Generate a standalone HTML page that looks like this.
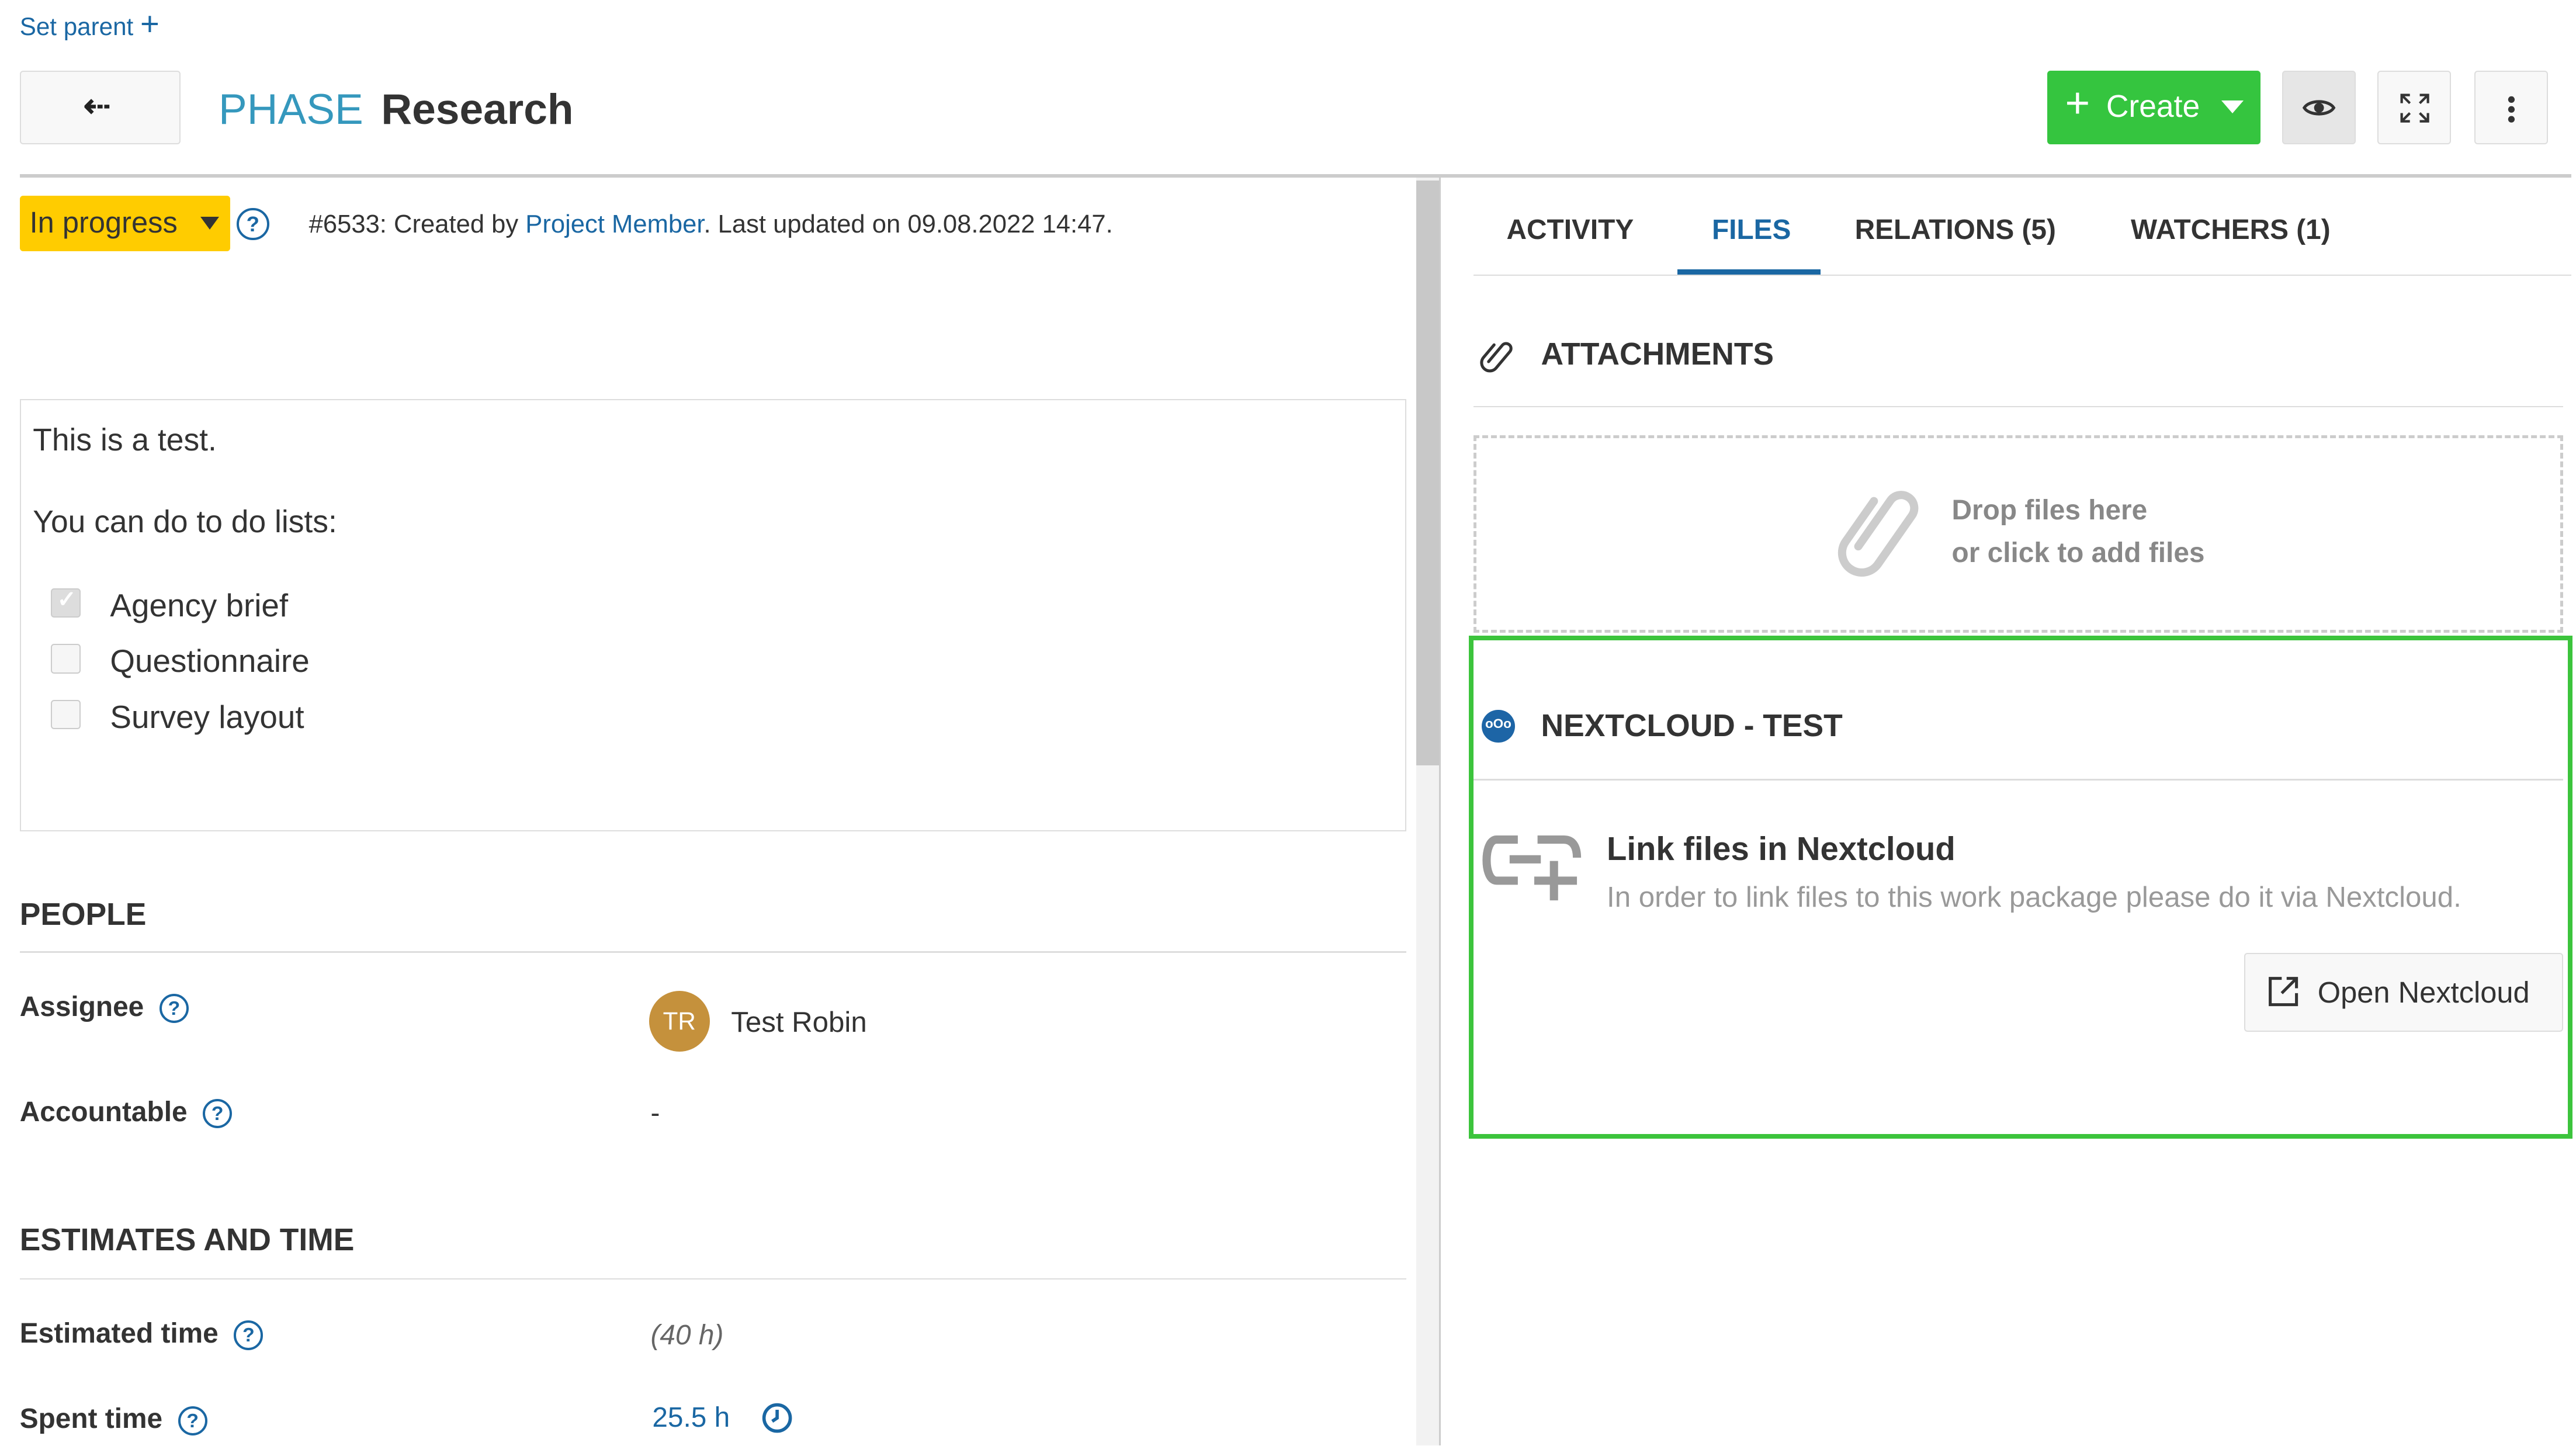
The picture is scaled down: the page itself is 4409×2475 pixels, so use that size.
<!DOCTYPE html>
<html><head><meta charset="utf-8"><style>
html,body{margin:0;padding:0;background:#fff;overflow:hidden}
body{width:4409px;height:2475px}
#r{zoom:2.8119;width:1568px;height:880px;position:relative;font-family:"Liberation Sans",sans-serif;color:#333}
.a{position:absolute;white-space:nowrap}
.btn{position:absolute;background:#f8f8f8;border:1px solid #ddd;border-radius:2px;box-sizing:border-box}
.h{font-size:19px;font-weight:bold;color:#333}
.lbl{font-size:17px;font-weight:bold;color:#333}
.q{display:inline-block;width:15px;height:15px;border:1.6px solid #1a67a3;border-radius:50%;color:#1a67a3;font-size:12px;font-weight:bold;text-align:center;line-height:15px;vertical-align:middle}
.cb{position:absolute;left:31px;width:18px;height:18px;border:1px solid #ccc;border-radius:2px;background:#f6f6f6;box-sizing:border-box}
.tab{position:absolute;top:130px;font-size:17px;color:#333;font-weight:bold}
</style></head><body><div id="r">
<div class="a" style="left:12px;top:8px;font-size:15px;color:#1a67a3">Set parent <span style="font-size:20px;line-height:10px">+</span></div>
<div class="btn" style="left:12px;top:43px;width:98px;height:45px"><div class="a" style="left:38px;top:9px;font-size:20px;color:#222;font-weight:bold">&#8672;</div></div>
<div class="a" style="left:133px;top:52px;font-size:26px;color:#3598bd">PHASE</div>
<div class="a" style="left:232px;top:52px;font-size:26px;color:#333;font-weight:bold">Research</div>
<div class="a" style="left:1246px;top:43px;width:130px;height:45px;background:#35c53f;border-radius:2px;color:#fff;font-size:19px"><span class="a" style="left:11px;top:6px;font-size:26px;line-height:28px">+</span><span class="a" style="left:36px;top:11px">Create</span><span class="a" style="left:106px;top:18px;border-left:7px solid transparent;border-right:7px solid transparent;border-top:8px solid #fff"></span></div>
<div class="btn" style="left:1389px;top:43px;width:45px;height:45px;background:#e6e6e6"><svg class="a" style="left:12px;top:14px" width="20" height="16" viewBox="0 0 20 16"><path d="M1 8C4 3 16 3 19 8C16 13 4 13 1 8Z" fill="none" stroke="#333" stroke-width="1.8"/><circle cx="10" cy="8" r="3" fill="#333"/></svg></div>
<div class="btn" style="left:1447px;top:43px;width:45px;height:45px"><svg class="a" style="left:12px;top:12px" width="20" height="20" viewBox="0 0 20 20" fill="none" stroke="#333" stroke-width="1.5"><path d="M2 7V2H7M2 2L7 7M13 2H18V7M18 2L13 7M2 13V18H7M2 18L7 13M18 13V18H13M18 18L13 13"/></svg></div>
<div class="btn" style="left:1506px;top:43px;width:45px;height:45px"><svg class="a" style="left:19px;top:14px" width="6" height="18"><circle cx="3" cy="3" r="2" fill="#333"/><circle cx="3" cy="9" r="2" fill="#333"/><circle cx="3" cy="15" r="2" fill="#333"/></svg></div>
<div class="a" style="left:12px;top:106px;width:1553px;height:2px;background:#ccc"></div>
<div class="a" style="left:862px;top:108px;width:14px;height:772px;background:#f2f2f2"></div>
<div class="a" style="left:862px;top:110px;width:14px;height:356px;background:#c8c8c8"></div>
<div class="a" style="left:876px;top:108px;width:1px;height:772px;background:#ccc"></div>
<div class="a" style="left:12px;top:119px;width:128px;height:34px;background:#ffcc00;border-radius:2px"><span class="a" style="left:6px;top:6px;font-size:18px;color:#333">In progress</span><span class="a" style="left:110px;top:13px;border-left:6px solid transparent;border-right:6px solid transparent;border-top:8px solid #333"></span></div>
<div class="a" style="left:144px;top:126px"><span class="q" style="width:17px;height:17px;line-height:17px;font-size:13px">?</span></div>
<div class="a" style="left:188px;top:128px;font-size:15.5px">#6533: Created by <span style="color:#1a67a3">Project Member</span>. Last updated on 09.08.2022 14:47.</div>
<div class="a" style="left:12px;top:243px;width:844px;height:263px;border:1px solid #ddd;box-sizing:border-box"></div>
<div class="a" style="left:20px;top:257px;font-size:19px">This is a test.</div>
<div class="a" style="left:20px;top:307px;font-size:19px">You can do to do lists:</div>
<div class="cb" style="top:358px;background:#ddd;border-color:#ccc"><span class="a" style="left:3px;top:-2px;color:#fff;font-size:14px;font-weight:bold">&#10003;</span></div>
<div class="a" style="left:67px;top:357px;font-size:19.5px">Agency brief</div>
<div class="cb" style="top:392px"></div>
<div class="a" style="left:67px;top:391px;font-size:19.5px">Questionnaire</div>
<div class="cb" style="top:426px"></div>
<div class="a" style="left:67px;top:425px;font-size:19.5px">Survey layout</div>
<div class="a h" style="left:12px;top:546px">PEOPLE</div>
<div class="a" style="left:12px;top:579px;width:844px;height:1px;background:#ddd"></div>
<div class="a lbl" style="left:12px;top:603px">Assignee &nbsp;<span class="q">?</span></div>
<div class="a" style="left:395px;top:603px;width:37px;height:37px;border-radius:50%;background:#c5913c;color:#fff;font-size:15px;text-align:center;line-height:37px">TR</div>
<div class="a" style="left:445px;top:612px;font-size:17.5px">Test Robin</div>
<div class="a lbl" style="left:12px;top:667px">Accountable &nbsp;<span class="q">?</span></div>
<div class="a" style="left:396px;top:668px;font-size:17px">-</div>
<div class="a h" style="left:12px;top:744px">ESTIMATES AND TIME</div>
<div class="a" style="left:12px;top:778px;width:844px;height:1px;background:#ddd"></div>
<div class="a lbl" style="left:12px;top:802px">Estimated time &nbsp;<span class="q">?</span></div>
<div class="a" style="left:396px;top:803px;font-size:17px;font-style:italic;color:#666">(40 h)</div>
<div class="a lbl" style="left:12px;top:854px">Spent time &nbsp;<span class="q">?</span></div>
<div class="a" style="left:397px;top:853px;font-size:17px;color:#1a67a3">25.5 h</div>
<svg class="a" style="left:463px;top:853px" width="20" height="20" viewBox="0 0 20 20" fill="none" stroke="#1a67a3" stroke-width="2"><circle cx="10" cy="10" r="8"/><path d="M10 5V10L7 12"/></svg>
<div class="tab" style="left:917px">ACTIVITY</div>
<div class="tab" style="left:1042px;color:#1a67a3">FILES</div>
<div class="a" style="left:1021px;top:164px;width:87px;height:3px;background:#1a67a3"></div>
<div class="tab" style="left:1129px">RELATIONS (5)</div>
<div class="tab" style="left:1297px">WATCHERS (1)</div>
<div class="a" style="left:897px;top:167px;width:668px;height:1px;background:#ddd"></div>
<svg class="a" style="left:900px;top:203px" width="24" height="26" viewBox="0 0 24 26"><g transform="rotate(40 12 13)" fill="none" stroke="#333" stroke-width="1.8" stroke-linecap="round"><path d="M10 20V7A3 3 0 0 1 16 7V20A5 5 0 0 1 6 20V10"/></g></svg>
<div class="a h" style="left:938px;top:205px">ATTACHMENTS</div>
<div class="a" style="left:897px;top:247px;width:663px;height:1px;background:#ddd"></div>
<div class="a" style="left:897px;top:265px;width:663px;height:120px;border:2px dashed #ccc;box-sizing:border-box"></div>
<svg class="a" style="left:1108px;top:286px" width="72" height="70" viewBox="0 0 72 70"><g transform="rotate(35 36 35)" fill="none" stroke="#ccc" stroke-width="5" stroke-linecap="round"><path d="M32 52V18A8 8 0 0 1 48 18V54A12 12 0 0 1 24 54V24"/></g></svg>
<div class="a" style="left:1188px;top:301px;font-size:17px;color:#888;font-weight:bold">Drop files here</div>
<div class="a" style="left:1188px;top:327px;font-size:17px;color:#888;font-weight:bold">or click to add files</div>
<div class="a" style="left:894px;top:387px;width:672px;height:306px;border:3px solid #3cc43c;box-sizing:border-box"></div>
<div class="a" style="left:902px;top:432px;width:20px;height:20px;border-radius:50%;background:#1d65a6"><span class="a" style="left:2px;top:4px;color:#fff;font-size:8px;font-weight:bold">oOo</span></div>
<div class="a h" style="left:938px;top:431px">NEXTCLOUD - TEST</div>
<div class="a" style="left:897px;top:474px;width:663px;height:1px;background:#ddd"></div>
<svg class="a" style="left:902px;top:506px" width="62" height="44" viewBox="0 0 62 44" fill="none" stroke="#999" stroke-width="5"><path d="M22 5H9C1 5 1 30 9 30H22M34 5H50C56 5 58 10 58 16"/><path d="M17 17H36"/><path d="M44 18V42M32 30H58"/></svg>
<div class="a" style="left:978px;top:505px;font-size:20px;color:#333;font-weight:bold">Link files in Nextcloud</div>
<div class="a" style="left:978px;top:536px;font-size:17.5px;color:#999">In order to link files to this work package please do it via Nextcloud.</div>
<div class="btn" style="left:1366px;top:580px;width:194px;height:48px"><svg class="a" style="left:13px;top:13px" width="20" height="20" viewBox="0 0 20 20" fill="none" stroke="#333" stroke-width="1.8"><path d="M9 2H2V18H18V11M12 2H18V8M18 2L9 11"/></svg><span class="a" style="left:44px;top:13px;font-size:18px;color:#333">Open Nextcloud</span></div>
</div></body></html>
